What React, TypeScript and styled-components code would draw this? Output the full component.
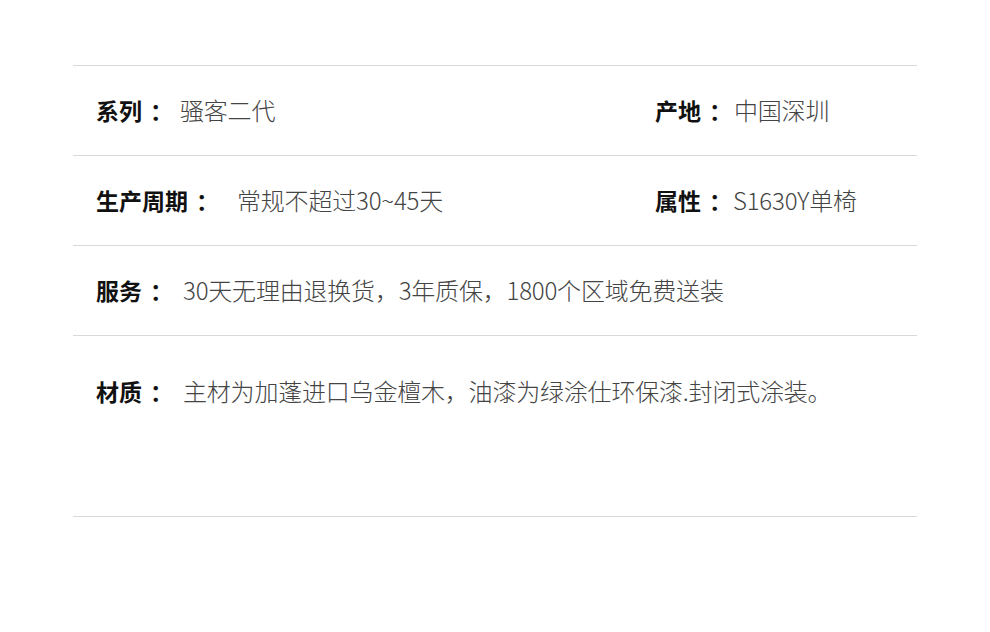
import React from 'react'
import styled, { createGlobalStyle } from 'styled-components'

const GlobalStyle = createGlobalStyle`
    html, body {
        margin: 0;
        padding: 0;
        background: #fff;
    }
    body {
        font-family: "Noto Sans CJK SC", "Noto Sans", sans-serif;
    }
`

const Table = styled.div`
    width: 844px;
    margin: 65px 0 0 73px;
    border-top: 1px solid #d9d9d9;
`

const Row = styled.div<{ $tall?: boolean }>`
    display: grid;
    grid-template-columns: 559px 1fr;
    align-items: ${p => (p.$tall ? 'start' : 'center')};
    height: ${p => (p.$tall ? '181px' : '90px')};
    padding: ${p => (p.$tall ? '37px 0 0 23px' : '0 0 2px 23px')};
    box-sizing: border-box;
    border-bottom: 1px solid #d9d9d9;
`

const Cell = styled.div<{ $wide?: boolean }>`
    display: flex;
    align-items: baseline;
    white-space: nowrap;
    grid-column: ${p => (p.$wide ? '1 / span 2' : 'auto')};
`

const Label = styled.span`
    font-size: 23px;
    font-weight: 700;
    color: #111;
`

const Colon = styled.span`
    margin-left: 8px;
    font-size: 23px;
    font-weight: 700;
    color: #111;
`

const Value = styled.span<{ $gap: number }>`
    margin-left: ${p => p.$gap}px;
    font-size: 24px;
    font-weight: 300;
    color: #444;
    letter-spacing: -0.2px;
`

type Field = { label: string; value: string; gap: number }

const Item: React.FC<{ field: Field; wide?: boolean }> = ({ field, wide }) => (
    <Cell $wide={wide}>
        <Label>{field.label}</Label>
        <Colon>：</Colon>
        <Value $gap={field.gap}>{field.value}</Value>
    </Cell>
)

const App: React.FC = () => {
    return (
        <>
            <GlobalStyle />
            <Table>
                <Row>
                    <Item field={{ label: '系列', value: '骚客二代', gap: 7 }} />
                    <Item field={{ label: '产地', value: '中国深圳', gap: 2 }} />
                </Row>
                <Row>
                    <Item field={{ label: '生产周期', value: '常规不超过30~45天', gap: 18 }} />
                    <Item field={{ label: '属性', value: 'S1630Y单椅', gap: 1 }} />
                </Row>
                <Row>
                    <Item wide field={{ label: '服务', value: '30天无理由退换货，3年质保，1800个区域免费送装', gap: 10 }} />
                </Row>
                <Row $tall>
                    <Item wide field={{ label: '材质', value: '主材为加蓬进口乌金檀木，油漆为绿涂仕环保漆.封闭式涂装。', gap: 10 }} />
                </Row>
            </Table>
        </>
    )
}

export default App
